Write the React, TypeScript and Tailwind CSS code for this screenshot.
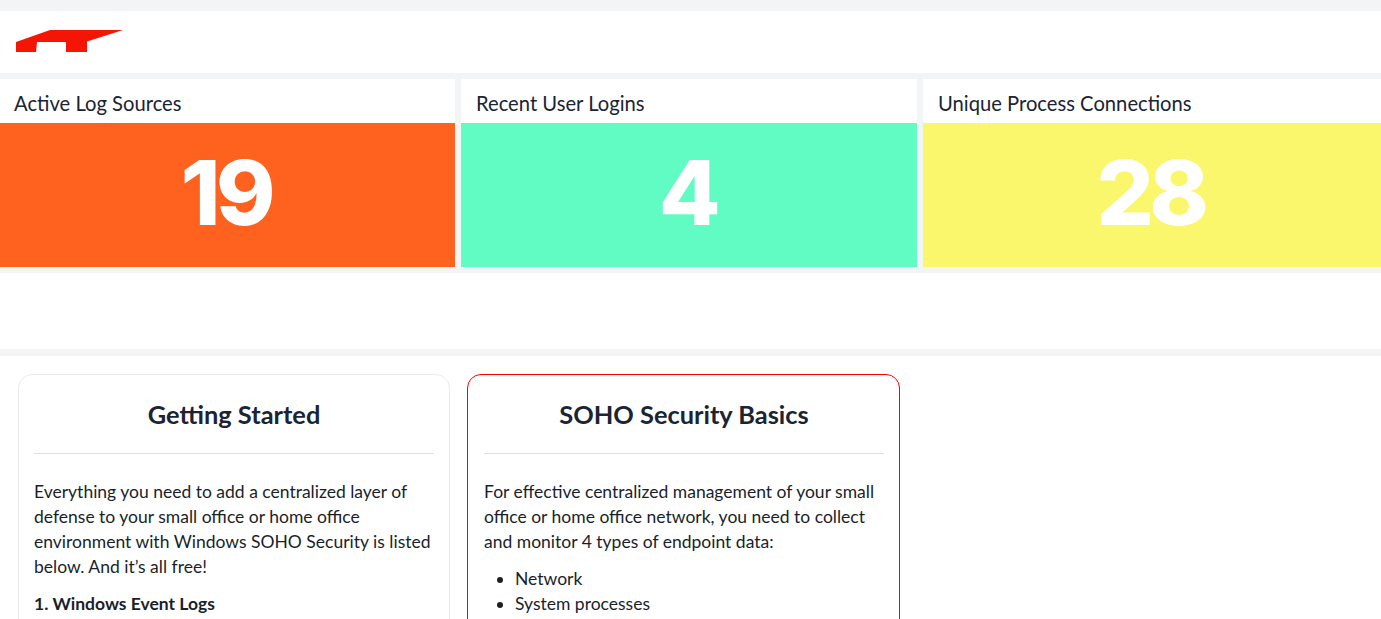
import React from "react";

const font = { fontFamily: '"Lato", "Open Sans", sans-serif' };

function StatPanel({ title, value, bg, inset }: { title: string; value: string; bg: string; inset: string }) {
  return (
    <div className="flex flex-col bg-white">
      <div className={"flex h-[44px] items-center pt-[5px] text-[20.2px] text-[#1a2433] " + inset}>{title}</div>
      <div
        className={
          "flex h-[144px] items-center justify-center pr-[3px] pb-[5px] font-['Inter'] text-[90px] leading-none font-extrabold tracking-[-0.05em] text-white " +
          bg
        }
      >
        {value}
      </div>
    </div>
  );
}

function Logo() {
  return (
    <svg width="108" height="24" viewBox="0 0 108 24" className="ml-[16px]">
      <path d="M0 12 L34 0 L107 0 L71 11.5 L71 22 L50 22 L50 12 L21 12 L20 22 L0 22 Z" fill="#f41505" />
    </svg>
  );
}

export default function App() {
  return (
    <div style={font} className="h-[619px] w-full overflow-hidden bg-white text-[#1a2433]">
      <div className="h-[11px] bg-[#f2f4f5]" />
      <div className="flex h-[62px] items-center bg-white">
        <Logo />
      </div>
      <div className="grid grid-cols-[455px_456px_1fr] gap-[6px] bg-[#f2f4f5] py-[6px]">
        <StatPanel title="Active Log Sources" value="19" bg="bg-[#ff611f]" inset="pl-[14px]" />
        <StatPanel title="Recent User Logins" value="4" bg="bg-[#61fcc3]" inset="pl-[15px]" />
        <StatPanel title="Unique Process Connections" value="28" bg="bg-[#fbf76c]" inset="pl-[15px]" />
      </div>
      <div className="h-[76px] bg-white" />
      <div className="h-[7px] bg-[#f2f4f5]" />
      <div className="flex gap-[17px] pt-[18px] pl-[18px]">
        <div className="h-[400px] w-[432px] rounded-[14px] border border-[#e9ebee] px-[15px]">
          <h2 className="flex h-[79px] items-center justify-center border-b border-[#dcdfe3] text-[25.4px] font-bold">
            Getting Started
          </h2>
          <div className="pt-[25px] text-[17.5px] leading-[25px] text-[#1a1f2b]">
            <p>
              Everything you need to add a centralized layer of defense to your small office or home office environment
              with Windows SOHO Security is listed below. And it’s all free!
            </p>
            <p className="mt-[12px] font-bold">1. Windows Event Logs</p>
          </div>
        </div>
        <div className="h-[400px] w-[433px] rounded-[14px] border border-[#ff0000] pr-[15px] pl-[16px]">
          <h2 className="flex h-[79px] items-center justify-center border-b border-[#dcdfe3] text-[25.4px] font-bold">
            SOHO Security Basics
          </h2>
          <div className="pt-[25px] text-[17.5px] leading-[25px] text-[#1a1f2b]">
            <p>
              For effective centralized management of your small office or home office network, you need to collect and
              monitor 4 types of endpoint data:
            </p>
            <ul className="mt-[12px] list-disc pl-[31px]">
              <li>Network</li>
              <li>System processes</li>
            </ul>
          </div>
        </div>
      </div>
    </div>
  );
}
